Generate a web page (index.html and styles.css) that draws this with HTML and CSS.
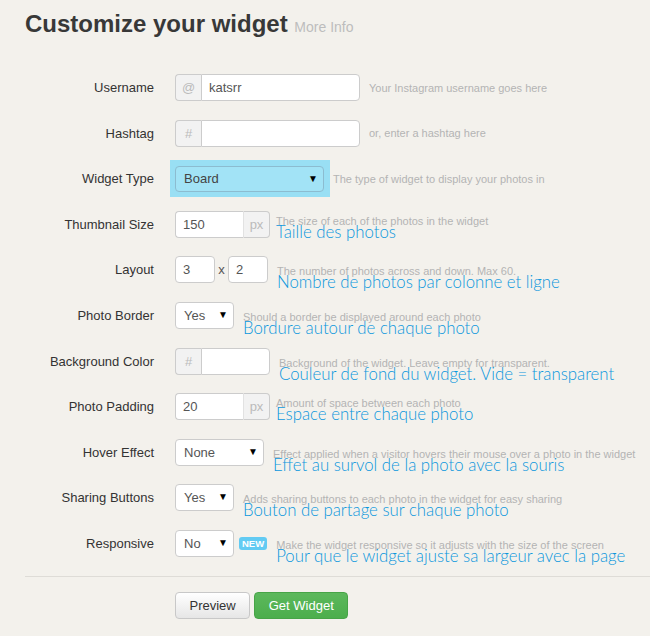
FILE: index.html
```html
<!DOCTYPE html>
<html lang="en">
<head>
    <meta charset="UTF-8">
    <meta name="viewport" content="width=device-width, initial-scale=1.0">
    <title>Customize your widget</title>
    <link rel="stylesheet" href="styles.css">
</head>
<body>

    <h1 class="title">Customize your widget <small class="more">More Info</small></h1>

    <form class="widget-form">
        <div class="row">
            <label class="label">Username</label>
            <div class="group wide"><span class="addon">@</span><input class="field" type="text" value="katsrr"></div>
            <div class="help single"><span class="hint">Your Instagram username goes here</span></div>
        </div>

        <div class="row">
            <label class="label">Hashtag</label>
            <div class="group wide"><span class="addon">#</span><input class="field" type="text"></div>
            <div class="help single"><span class="hint">or, enter a hashtag here</span></div>
        </div>

        <div class="row">
            <label class="label">Widget Type</label>
            <div class="highlight">
                <div class="select type"><span class="value">Board</span><span class="arrow">&#9660;</span></div>
            </div>
            <div class="help single tight"><span class="hint">The type of widget to display your photos in</span></div>
        </div>

        <div class="row">
            <label class="label">Thumbnail Size</label>
            <div class="group small"><input class="field" type="text" value="150"><span class="addon right">px</span></div>
            <div class="help near">
                <span class="hint">The size of each of the photos in the widget</span>
                <span class="note">Taille des photos</span>
            </div>
        </div>

        <div class="row">
            <label class="label">Layout</label>
            <div class="layout">
                <input class="field box" type="text" value="3">
                <span class="times">x</span>
                <input class="field box" type="text" value="2">
            </div>
            <div class="help">
                <span class="hint">The number of photos across and down. Max 60.</span>
                <span class="note">Nombre de photos par colonne et ligne</span>
            </div>
        </div>

        <div class="row">
            <label class="label">Photo Border</label>
            <div class="select short"><span class="value">Yes</span><span class="arrow">&#9660;</span></div>
            <div class="help">
                <span class="hint">Should a border be displayed around each photo</span>
                <span class="note">Bordure autour de chaque photo</span>
            </div>
        </div>

        <div class="row">
            <label class="label">Background Color</label>
            <div class="group small"><span class="addon">#</span><input class="field" type="text"></div>
            <div class="help">
                <span class="hint">Background of the widget. Leave empty for transparent.</span>
                <span class="note">Couleur de fond du widget. Vide = transparent</span>
            </div>
        </div>

        <div class="row">
            <label class="label">Photo Padding</label>
            <div class="group small"><input class="field" type="text" value="20"><span class="addon right">px</span></div>
            <div class="help near">
                <span class="hint">Amount of space between each photo</span>
                <span class="note">Espace entre chaque photo</span>
            </div>
        </div>

        <div class="row">
            <label class="label">Hover Effect</label>
            <div class="select mid"><span class="value">None</span><span class="arrow">&#9660;</span></div>
            <div class="help">
                <span class="hint">Effect applied when a visitor hovers their mouse over a photo in the widget</span>
                <span class="note">Effet au survol de la photo avec la souris</span>
            </div>
        </div>

        <div class="row">
            <label class="label">Sharing Buttons</label>
            <div class="select short"><span class="value">Yes</span><span class="arrow">&#9660;</span></div>
            <div class="help">
                <span class="hint">Adds sharing buttons to each photo in the widget for easy sharing</span>
                <span class="note">Bouton de partage sur chaque photo</span>
            </div>
        </div>

        <div class="row">
            <label class="label">Responsive</label>
            <div class="select short"><span class="value">No</span><span class="arrow">&#9660;</span></div>
            <span class="badge">NEW</span>
            <div class="help after-badge">
                <span class="hint">Make the widget responsive so it adjusts with the size of the screen</span>
                <span class="note">Pour que le widget ajuste sa largeur avec la page</span>
            </div>
        </div>

        <hr class="divider">

        <div class="actions">
            <button type="button" class="btn">Preview</button>
            <button type="button" class="btn btn-green">Get Widget</button>
        </div>
    </form>

</body>
</html>
```

FILE: styles.css
```css
body { margin: 0; background: #f3f1ec; font-family: "Liberation Sans", Arial, sans-serif; color: #333; overflow: hidden; }

.title { margin: 0; padding: 9px 25px 0; font-size: 24px; line-height: 30px; color: #383838; font-weight: bold; }
.more { font-size: 14px; font-weight: normal; color: #bdbdbd; }

.widget-form { margin-top: 32px; display: flex; flex-direction: column; gap: 18.6px; }
.row { display: flex; align-items: center; height: 27px; }
.label { width: 129px; margin: 0 21px 0 25px; flex: none; text-align: right; font-size: 13px; color: #333; }

.field { box-sizing: border-box; height: 27px; border: 1px solid #ccc; border-radius: 4px; background: #fff; padding: 0 7px; font: 13px "Liberation Sans", Arial, sans-serif; color: #555; outline: none; }

.group { display: flex; height: 27px; flex: none; }
.group .field { flex: 1; min-width: 0; border-radius: 0 4px 4px 0; }
.group .addon { box-sizing: border-box; width: 26px; border: 1px solid #ccc; border-right: none; border-radius: 4px 0 0 4px; background: #f2f2f2; color: #bbb; font-size: 13px; display: flex; align-items: center; justify-content: center; }
.group .addon.right { border-right: 1px solid #ccc; border-left: none; border-radius: 0 4px 4px 0; }
.group .field:first-child { border-radius: 4px 0 0 4px; border-right: 1px solid #e2e2e2; }
.group.wide { width: 185px; }
.group.small { width: 95px; }

.layout { display: flex; align-items: center; flex: none; }
.field.box { width: 40px; }
.times { width: 13px; text-align: center; font-size: 13px; color: #555; }

.select { position: relative; box-sizing: border-box; height: 27px; flex: none; border: 1px solid #ccc; border-radius: 4px; background: #fff; font-size: 13px; color: #555; display: flex; align-items: center; padding-left: 8px; }
.select .arrow { position: absolute; right: 5px; top: 7px; font-size: 10px; line-height: 10px; color: #000; }
.select.short { width: 59px; }
.select.mid { width: 89px; }

.highlight { flex: none; margin: -6px 0 -5px -5px; padding: 6px 6px 5px 5px; background: #99dff4; }
.select.type { width: 149px; height: 26px; background: #a2e3f6; border-color: #8cbcd0; color: #444; }

.help { display: flex; flex-direction: column; align-self: flex-start; margin-left: 9px; padding-top: 9px; }
.help.single { align-self: center; padding-top: 0; }
.help.tight { margin-left: 3px; }
.help.near { margin-left: 6px; padding-top: 4px; }
.help.after-badge { margin-left: 9px; }
.hint { font-size: 11px; line-height: 12px; color: #b4b4b4; white-space: nowrap; }
.note { margin-top: -3px; font-family: Lato, "Open Sans", sans-serif; font-weight: 300; font-size: 16.8px; line-height: 16px; color: #0b97dd; white-space: nowrap; }

.badge { margin-left: 5px; padding: 1px 3px; border-radius: 3px; background: #62cbf3; color: #fff; font-size: 9.5px; font-weight: bold; line-height: 11.5px; }

.divider { margin: 0 0 0 25px; border: none; border-top: 1px solid #dedcd7; }

.actions { display: flex; gap: 4px; padding-left: 175px; margin-top: -3.5px; }
.btn { height: 27px; padding: 0 13.5px; border: 1px solid #c8c8c8; border-radius: 4px; background: linear-gradient(#fff, #e6e6e6); font: 13px "Liberation Sans", Arial, sans-serif; color: #333; cursor: pointer; }
.btn-green { border-color: #47a447; background: linear-gradient(#5cb85c, #4cae4c); color: #fff; }
```
